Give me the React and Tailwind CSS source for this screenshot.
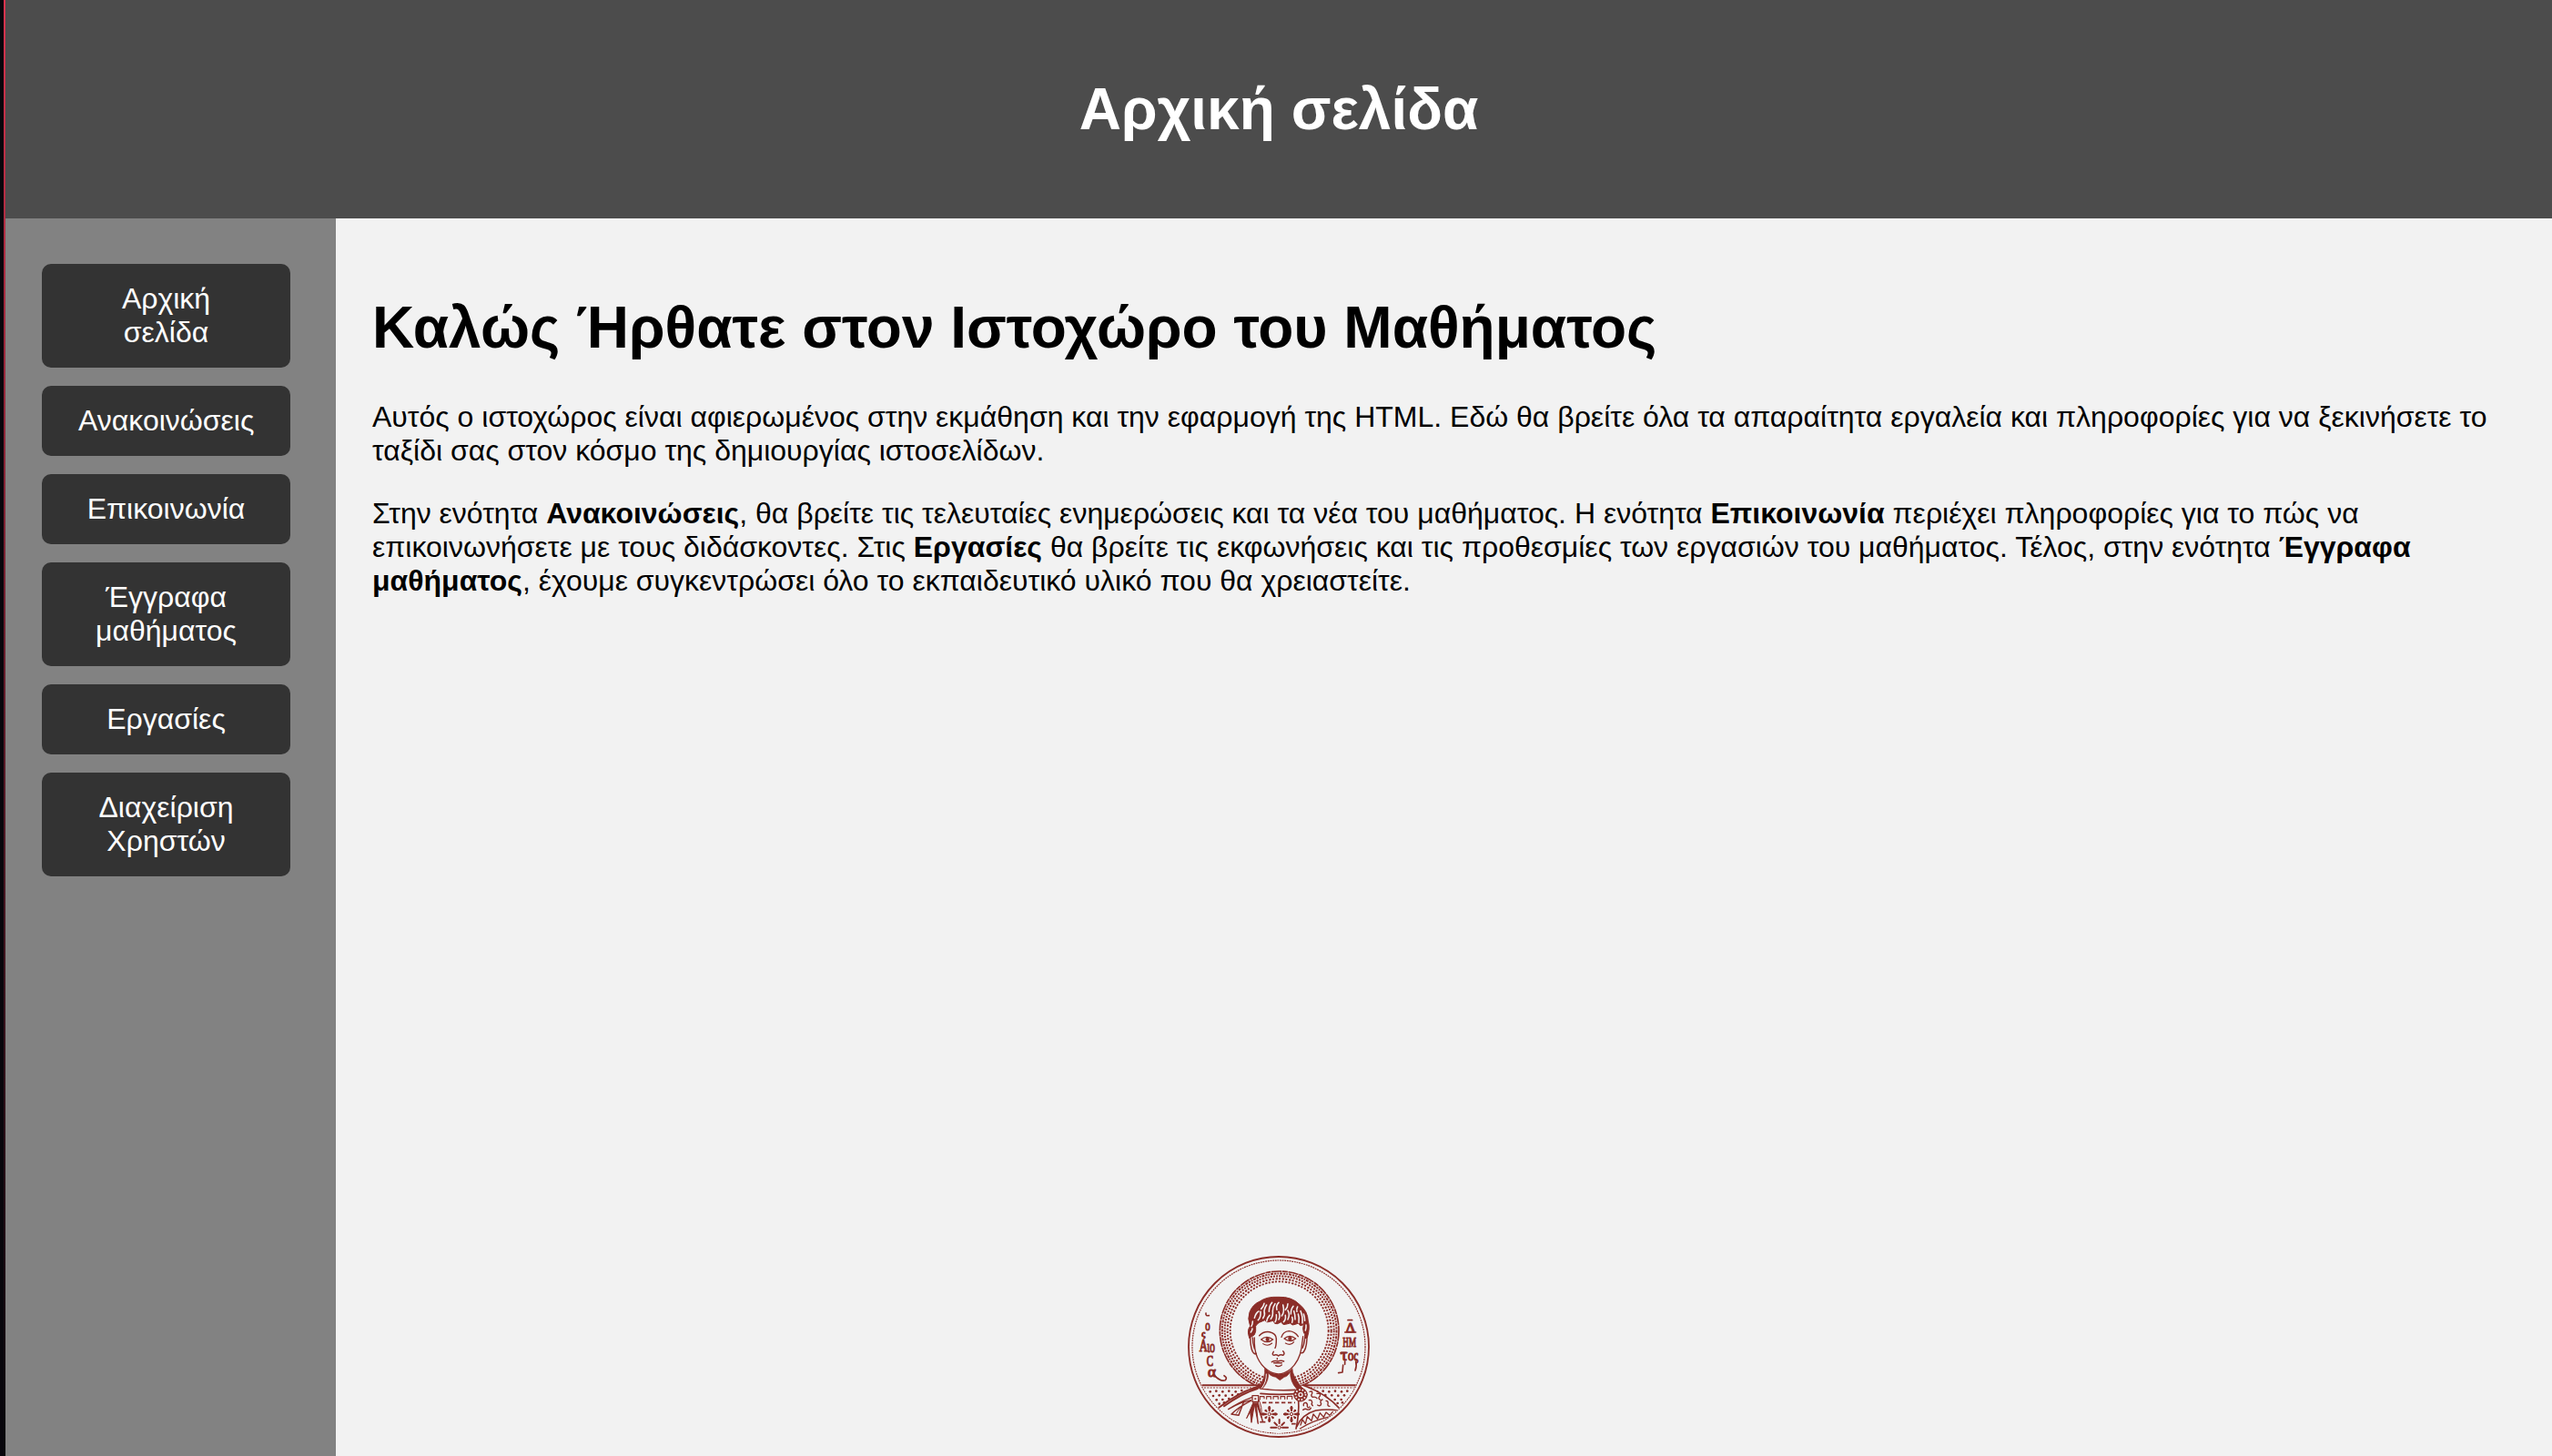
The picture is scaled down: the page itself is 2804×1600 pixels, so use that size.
import React from "react";

const links = [
  "Αρχική σελίδα",
  "Ανακοινώσεις",
  "Επικοινωνία",
  "Έγγραφα μαθήματος",
  "Εργασίες",
  "Διαχείριση Χρηστών",
];

const ink = "#8b2d28";
const paper = "#f2f2f2";

// Concentric dotted rings of the halo: [radius, stroke width, dash pattern]
const haloRings = [
  [196, 5, "34 2 18 2"],
  [188.5, 6, "7 3 5 3 9 3"],
  [180, 6, "6 3.5"],
  [171, 6, "7 4 6 5"],
  [162, 5.5, "6 5 7 4"],
];

const groundDots = [
  [104, 478], [124, 476], [145, 478], [166, 476], [188, 478], [208, 474],
  [114, 492], [134, 490], [155, 491], [177, 489], [196, 487],
  [125, 505], [145, 504], [166, 501], [134, 518], [150, 514],
  [457, 478], [476, 476], [496, 478], [516, 476], [537, 478], [556, 476],
  [484, 489], [505, 490], [526, 491], [546, 490],
  [515, 504], [536, 504], [524, 516], [540, 514],
];

const locks = [
  "M250 235 q4 -16 14 -22", "M262 242 q10 -10 8 -28", "M272 205 q8 -8 10 -18",
  "M278 236 q8 -12 4 -24 q2 -12 8 -20", "M290 246 q2 -12 10 -20", "M298 214 q0 -18 10 -30",
  "M304 238 q8 -10 6 -26 q0 -12 8 -24", "M318 248 q6 -8 4 -24", "M324 208 q-4 -14 6 -24",
  "M330 240 q6 -12 0 -26", "M340 228 q10 -12 4 -36", "M346 248 q8 -8 6 -22",
  "M352 208 q8 -8 8 -20", "M360 240 q8 -16 0 -30", "M370 222 q0 -18 8 -26",
  "M374 250 q4 -10 0 -18", "M384 240 q0 -18 -4 -28", "M390 214 q-2 -10 2 -16",
  "M396 250 q2 -18 -2 -28", "M408 252 q2 -22 -6 -40", "M416 244 q0 -12 -4 -22",
  "M240 262 q4 -6 4 -16", "M238 282 q5 -6 5 -12", "M418 276 q3 -8 2 -18",
];

function Flower({ x, y }) {
  return (
    <g transform={`translate(${x} ${y})`} fill={ink} stroke="none">
      {[0, 90, 180, 270].map((a) => (
        <path key={a} d="M-2 -8 L-5 -21 L-2 -27 H2 L5 -21 L2 -8Z" transform={`rotate(${a})`} />
      ))}
      {[45, 135, 225, 315].map((a) => (
        <path key={a} d="M-2 -10 L-4 -18 L0 -21 L4 -18 L2 -10Z" transform={`rotate(${a})`} />
      ))}
      <circle r="5" fill={paper} stroke={ink} strokeWidth="3" />
    </g>
  );
}

function Seal() {
  return (
    <svg viewBox="30 30 600 600" className="block size-[200px]" fill="none" stroke={ink} strokeWidth="4" strokeLinecap="round" strokeLinejoin="round">
      <defs>
        <clipPath id="disc">
          <circle cx="330" cy="330" r="284" />
        </clipPath>
      </defs>
      <circle cx="330" cy="330" r="297" strokeWidth="5.5" />
      <circle cx="330" cy="330" r="285" strokeWidth="3.6" strokeDasharray="5.5 2.5" strokeLinecap="butt" />

      {/* halo */}
      <g strokeLinecap="butt">
        {haloRings.map(([r, w, dash]) => (
          <circle key={r} cx="332" cy="277" r={r} strokeWidth={w} strokeDasharray={dash} />
        ))}
      </g>

      {/* ground band */}
      <g clipPath="url(#disc)">
        <path d="M60 464 H600 V640 H60Z" fill={paper} stroke="none" />
        <path d="M78 457 H268 M408 457 H584" strokeWidth="6" strokeLinecap="butt" />
        <path d="M84 465 H250 M425 465 H578" strokeWidth="3" strokeDasharray="6 4" strokeLinecap="butt" />
        <g fill={ink} stroke="none">
          {groundDots.map(([x, y]) => (
            <circle key={`${x}-${y}`} cx={x} cy={y} r="4" />
          ))}
        </g>

        {/* robe */}
        <path d="M268 460 C225 472 172 500 133 530 L160 560 L250 604 L330 616 L420 600 L532 534 C500 500 455 475 410 458Z" fill={paper} stroke="none" />
        <path d="M268 460 C225 470 172 500 133 530 M260 468 C225 478 180 504 150 526" strokeWidth="5.5" />
        <path d="M410 457 C455 472 500 500 530 533" strokeWidth="5" />
        <path d="M243 496 Q200 512 164 536 L186 524 Q210 512 238 506" strokeWidth="4" />
        <path d="M238 508 Q198 528 174 552 L198 556 L214 512" strokeWidth="4.5" />
        <path d="M190 550 L206 526" strokeWidth="3" />
        <path d="M246 514 L224 566 L236 544 L240 580 L250 520 L262 584 L256 516 L278 578 L262 514" fill={ink} strokeWidth="3" />
        <path d="M262 500 Q278 530 272 560" strokeWidth="3" />
        <path d="M270 468 Q325 476 384 472 M270 484 Q325 490 384 485" strokeWidth="5" />
        <path d="M268 504 V494 H282 V500 M290 502 V494 H304 V502 M312 502 V494 H328 V502 M336 502 V494 H350 V502 M358 502 V493 H374 V502" strokeWidth="3.5" />
        <path d="M276 514 H384" strokeWidth="5" strokeDasharray="13 8" strokeLinecap="butt" />
        <Flower x={299} y={552} />
        <Flower x={372} y={552} />
        <path d="M332 570 V582 M304 596 H322 M342 596 H360 M316 580 L324 588 M348 580 L340 588" strokeWidth="6" />
        <circle cx="332" cy="596" r="5" fill={paper} strokeWidth="3" />
        <path d="M270 578 H284 M374 584 H384" strokeWidth="5" />
        <path d="M395 506 Q398 550 387 600" strokeWidth="5" />

        {/* ornamented sleeve */}
        <path d="M390 592 Q408 552 452 540 Q490 534 526 540" strokeWidth="5" />
        <path d="M400 600 Q440 574 500 560" strokeWidth="4" />
        <path d="M402 588 L408 570 L418 584 L424 560 L438 574 L444 552 L458 568 L466 548 L478 562 L486 546 L498 556 L508 544" strokeWidth="4" />
        <path d="M432 478 q10 -4 8 6 q-6 8 2 12 q10 -2 14 4 M456 484 q14 -2 10 8 q-8 8 0 12 M412 524 q-2 -10 8 -10 q6 4 4 12 q2 8 8 2 M430 506 q10 -2 10 8 q-4 6 2 10 M458 522 q10 6 12 -4 q-6 -10 4 -14 M486 508 q8 0 6 10 q-2 8 6 8 M410 538 q8 -6 14 -1 q8 2 12 -5" strokeWidth="4.2" />
      </g>

      {/* neck */}
      <path d="M288 400 Q292 440 270 466 L320 470 L388 466 Q372 440 374 396Z" fill={paper} stroke="none" />
      <path d="M284 396 Q288 440 258 468 L278 466 Q300 440 295 412Z" fill={ink} strokeWidth="2" />
      <path d="M289 420 Q290 446 274 466" stroke={paper} strokeWidth="3" />
      <path d="M374 396 Q374 432 412 470 L390 470 Q366 444 368 410Z" fill={ink} strokeWidth="2" />
      <path d="M292 410 Q330 432 369 408 Q362 428 348 430 L334 440 L320 430 Q298 426 292 410Z" fill={ink} strokeWidth="2" />

      {/* head */}
      <path d="M247 250 L250 330 Q256 376 286 402 Q330 438 374 402 Q402 374 406 340 L416 250Z" fill={paper} stroke="none" />
      <path d="M250 300 Q248 340 260 366 Q272 392 292 406 Q330 434 368 404 Q398 378 405 334 L410 296" strokeWidth="4" />
      <path d="M236 290 Q236 330 244 346 Q250 356 256 352 M244 300 Q244 320 250 336" strokeWidth="4.5" />
      <path d="M423 290 Q424 326 414 344 Q410 352 404 350 M416 300 Q414 322 408 334" strokeWidth="4.5" />
      <path d="M233 300 Q224 276 236 262 Q226 236 234 216 Q244 190 268 180 Q290 164 330 166 Q372 164 398 190 Q426 212 427 246 Q434 266 424 300 L416 302 Q418 286 412 282 Q408 272 412 256 Q400 266 396 252 L384 256 Q374 262 368 252 L352 256 Q344 260 338 248 L326 254 Q316 258 312 244 L296 248 Q290 252 284 242 L266 250 Q256 256 254 262 Q256 280 250 290 Q244 296 233 300Z" fill={ink} strokeWidth="3" />
      <g stroke={paper} strokeWidth="4.6">
        {locks.map((d) => (
          <path key={d} d={d} />
        ))}
      </g>

      {/* features */}
      <path d="M266 293 Q280 278 300 281 Q322 286 322 304 Q322 328 318 334 M313 346 Q306 356 314 358 Q322 354 329 360 Q336 354 344 358 Q352 352 344 344" strokeWidth="4.4" />
      <path d="M339 298 Q344 280 364 278 Q384 280 394 296" strokeWidth="4.2" />
      <path d="M272 306 Q290 290 311 306 Q292 322 272 306Z M348 303 Q366 288 386 303 Q368 318 348 303Z" strokeWidth="4" />
      <circle cx="293" cy="306" r="6.5" fill={ink} stroke="none" />
      <circle cx="367" cy="303" r="6.5" fill={ink} stroke="none" />
      <path d="M278 320 Q294 330 308 318 M352 318 Q370 328 380 314" strokeWidth="3.2" />
      <path d="M307 380 Q318 374 327 378 Q338 373 347 378 M314 383 H340 M320 392 Q330 398 340 390 M325 368 v3" strokeWidth="4.4" />

      {/* brooches */}
      <rect x="243" y="491" width="20" height="20" fill={paper} strokeWidth="4" />
      <rect x="250" y="499" width="6" height="5" fill={ink} stroke="none" />
      <circle cx="402" cy="488" r="22" fill={ink} strokeWidth="3" />
      <circle cx="402" cy="488" r="16.5" stroke={paper} strokeWidth="6" strokeDasharray="0.1 10.27" />
      <circle cx="402" cy="488" r="8" fill={paper} stroke="none" />
      <circle cx="402" cy="488" r="4" fill={ink} stroke="none" />

      {/* inscription */}
      <g fill={ink} stroke={ink} strokeWidth="3.4" fontFamily="Liberation Serif, serif" textAnchor="middle">
        <text x="96" y="275" fontSize="48" textLength="16" lengthAdjust="spacingAndGlyphs">ο</text>
        <text x="82" y="296" fontSize="30">ς</text>
        <text x="82" y="346" fontSize="56" textLength="27" lengthAdjust="spacingAndGlyphs">Α</text>
        <text x="107" y="348" fontSize="58" textLength="26" lengthAdjust="spacingAndGlyphs">ιο</text>
        <text x="103" y="392" fontSize="50" textLength="22" lengthAdjust="spacingAndGlyphs">C</text>
        <text x="110" y="430" fontSize="52">α</text>
        <text x="566" y="282" fontSize="44" textLength="30" lengthAdjust="spacingAndGlyphs">Δ</text>
        <text x="563" y="330" fontSize="46" textLength="44" lengthAdjust="spacingAndGlyphs">ΗΜ</text>
        <text x="545" y="376" fontSize="56">τ</text>
        <text x="575" y="376" fontSize="50" textLength="34" lengthAdjust="spacingAndGlyphs">ος</text>
      </g>
      <path d="M90 219 q-2 10 10 8 M558 242 h14 M548 282 h36 M118 424 q20 22 36 16 q8 -8 -4 -15 M534 350 h18 M548 378 v10 M542 390 l-2 24 l-13 2 M584 378 q4 16 -2 30" strokeWidth="5" />
    </svg>
  );
}

export default function App() {
  return (
    <div className="relative flex h-[1600px] w-full overflow-hidden bg-[#f2f2f2] font-['Liberation_Sans',Arial,sans-serif] text-[32px] leading-[37px] text-black">
      <div className="w-1 shrink-0 bg-[#08060c]" />
      <div className="w-0.5 shrink-0 bg-linear-to-b from-[#d9344f] via-[#5c1a28] to-[#08060c]" />
      <div className="flex min-w-0 flex-1 flex-col">
        <header className="flex h-60 shrink-0 items-center justify-center bg-[#4c4c4c] text-white">
          <h1 className="text-[64px] leading-[74px] font-bold">Αρχική σελίδα</h1>
        </header>
        <div className="flex min-h-0 flex-1">
          <nav className="flex w-[363px] shrink-0 flex-col gap-5 bg-[#828282] pt-[50px] pr-[50px] pl-10">
            {links.map((label) => (
              <a key={label} href="#" className="rounded-[10px] bg-[#333333] px-10 py-5 text-center text-white">
                {label}
              </a>
            ))}
          </nav>
          <main className="min-w-0 flex-1 px-10 pt-[83px]">
            <h1 className="mb-[43px] text-[64px] leading-[74px] font-bold">
              Καλώς Ήρθατε στον Ιστοχώρο του Μαθήματος
            </h1>
            <p className="mb-8">
              Αυτός ο ιστοχώρος είναι αφιερωμένος στην εκμάθηση και την εφαρμογή της HTML. Εδώ θα βρείτε όλα τα
              απαραίτητα εργαλεία και πληροφορίες για να ξεκινήσετε το ταξίδι σας στον κόσμο της δημιουργίας
              ιστοσελίδων.
            </p>
            <p>
              Στην ενότητα <strong>Ανακοινώσεις</strong>, θα βρείτε τις τελευταίες ενημερώσεις και τα νέα του
              μαθήματος. Η ενότητα <strong>Επικοινωνία</strong> περιέχει πληροφορίες για το πώς να επικοινωνήσετε με
              τους διδάσκοντες. Στις <strong>Εργασίες</strong> θα βρείτε τις εκφωνήσεις και τις προθεσμίες των
              εργασιών του μαθήματος. Τέλος, στην ενότητα <strong>Έγγραφα μαθήματος</strong>, έχουμε συγκεντρώσει
              όλο το εκπαιδευτικό υλικό που θα χρειαστείτε.
            </p>
          </main>
        </div>
      </div>
      {/* seal centred over the bottom edge of the page */}
      <footer className="pointer-events-none absolute right-0 bottom-5 left-1.5 flex justify-center">
        <Seal />
      </footer>
    </div>
  );
}
